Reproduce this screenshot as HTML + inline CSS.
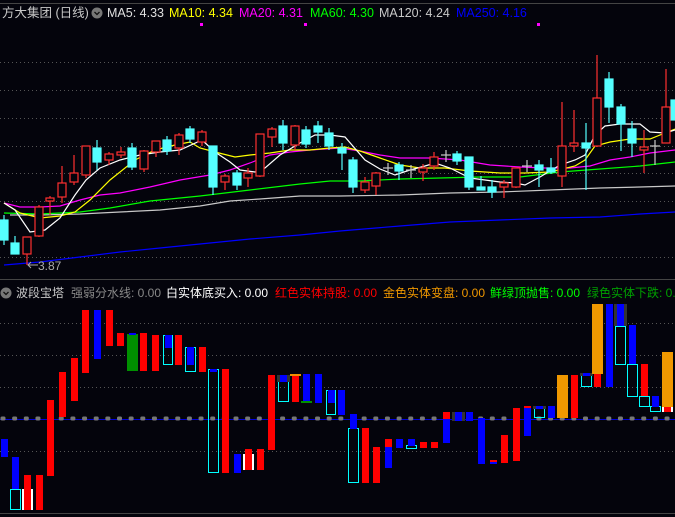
<!DOCTYPE html><html><head><meta charset="utf-8"><style>
body{margin:0;background:#04040c;width:675px;height:517px;overflow:hidden;position:relative;font-family:"Liberation Sans","Noto Sans CJK SC",sans-serif}
svg{position:absolute;left:0;top:0}
.t{position:absolute;font-size:12.5px;white-space:nowrap;line-height:14px}
.b{font-size:12px}
</style></head><body>
<svg width="675" height="517" viewBox="0 0 675 517">
<line x1="0" y1="3.5" x2="675" y2="3.5" stroke="#444" />
<line x1="0" y1="279.5" x2="675" y2="279.5" stroke="#444"/>
<line x1="0" y1="513.5" x2="675" y2="513.5" stroke="#444"/>
<g stroke="#555" stroke-dasharray="1,3">
<line x1="0" y1="62.5" x2="675" y2="62.5"/><line x1="0" y1="90.5" x2="675" y2="90.5"/><line x1="0" y1="118.5" x2="675" y2="118.5"/><line x1="0" y1="146.5" x2="675" y2="146.5"/><line x1="0" y1="173.5" x2="675" y2="173.5"/><line x1="0" y1="201.5" x2="675" y2="201.5"/><line x1="0" y1="257.5" x2="675" y2="257.5"/>
<line x1="0" y1="323.5" x2="675" y2="323.5"/><line x1="0" y1="355.5" x2="675" y2="355.5"/><line x1="0" y1="387.5" x2="675" y2="387.5"/><line x1="0" y1="451.5" x2="675" y2="451.5"/>
</g>
<g fill="#ff00ff"><rect x="200" y="23" width="3" height="3"/><rect x="304" y="23" width="3" height="3"/><rect x="537" y="23" width="3" height="3"/></g>
<g fill="none" stroke-width="1.2">
<polyline stroke="#0000ff" points="4,265 40,262 80,257 120,252 160,248 200,244 250,239 300,235 340,231 400,226 450,222 500,220 550,218 600,217 640,214 675,212"/>
<polyline stroke="#c8c8c8" points="10,215 40,215 80,214 120,212 160,210 200,206 230,201 260,199 300,196 340,196 400,195 450,193 500,192 550,190 600,188 640,187 675,186"/>
<polyline stroke="#00ff00" points="4,213 40,214 80,212 110,208 150,201 200,196 250,190 300,184 330,181 360,181 400,179 440,178 480,177 520,177 560,172 600,169 640,166 675,162"/>
<polyline stroke="#ff00ff" points="4,203 20,207 40,207 60,206 80,200 100,195 120,193 150,187 180,180 210,175 230,170 250,163 270,155 290,152 310,150 340,148 360,151 380,155 400,158 430,158 460,160 490,165 520,167 545,168 570,168 590,166 610,160 630,157 650,153 675,150"/>
<polyline stroke="#ffff00" points="4,203 20,213 40,218 60,216 75,212 90,200 110,180 135,160 155,150 175,145 190,142 200,148 215,152 235,157 250,155 270,153 290,150 310,150 330,148 345,147 360,151 380,158 400,165 420,168 445,168 470,171 500,173 525,173 550,172 575,166 585,160 595,146 610,142 630,139 650,139 665,133 675,129"/>
<polyline stroke="#ffffff" points="4,203 15,210 30,232 45,230 60,218 75,195 86,180 100,168 120,160 140,155 160,152 180,150 202,140 215,152 230,162 240,170 255,172 265,168 280,155 300,143 315,135 330,135 345,137 365,160 380,169 395,175 410,170 425,166 435,163 450,168 470,178 485,180 500,182 515,183 525,185 540,177 560,165 575,160 585,155 595,135 605,126 620,124 640,124 650,132 665,133 675,130"/>
</g>
<g stroke-width="1.2">
<g stroke="#55ffff" fill="#55ffff">
<line x1="4" y1="215" x2="4" y2="245"/><rect x="0" y="220" width="8" height="20"/>
<line x1="15" y1="236" x2="15" y2="254"/><rect x="11" y="243" width="8" height="11"/>
<line x1="97" y1="140" x2="97" y2="170"/><rect x="93" y="148" width="8" height="14"/>
<line x1="132" y1="143" x2="132" y2="170"/><rect x="128" y="148" width="8" height="19"/>
<line x1="167" y1="136" x2="167" y2="155"/><rect x="163" y="140" width="8" height="11"/>
<line x1="190" y1="126" x2="190" y2="143"/><rect x="186" y="129" width="8" height="10"/>
<line x1="213" y1="146" x2="213" y2="195"/><rect x="209" y="146" width="8" height="41"/>
<line x1="237" y1="170" x2="237" y2="190"/><rect x="233" y="173" width="8" height="12"/>
<line x1="283" y1="120" x2="283" y2="150"/><rect x="279" y="126" width="8" height="17"/>
<line x1="306" y1="126" x2="306" y2="148"/><rect x="302" y="130" width="8" height="14"/>
<line x1="318" y1="121" x2="318" y2="143"/><rect x="314" y="126" width="8" height="6"/>
<line x1="329" y1="128" x2="329" y2="150"/><rect x="325" y="133" width="8" height="13"/>
<line x1="342" y1="143" x2="342" y2="170"/><rect x="338" y="148" width="8" height="5"/>
<line x1="353" y1="157" x2="353" y2="193"/><rect x="349" y="160" width="8" height="27"/>
<line x1="399" y1="162" x2="399" y2="180"/><rect x="395" y="165" width="8" height="6"/>
<line x1="457" y1="151" x2="457" y2="165"/><rect x="453" y="154" width="8" height="7"/>
<line x1="469" y1="157" x2="469" y2="190"/><rect x="465" y="157" width="8" height="30"/>
<line x1="481" y1="176" x2="481" y2="190"/><rect x="477" y="187" width="8" height="3"/>
<line x1="492" y1="180" x2="492" y2="198"/><rect x="488" y="187" width="8" height="5"/>
<line x1="539" y1="160" x2="539" y2="187"/><rect x="535" y="165" width="8" height="5"/>
<line x1="551" y1="158" x2="551" y2="174"/><rect x="547" y="168" width="8" height="4"/>
<line x1="586" y1="123" x2="586" y2="190"/><rect x="582" y="143" width="8" height="5"/>
<line x1="609" y1="72" x2="609" y2="123"/><rect x="605" y="79" width="8" height="28"/>
<line x1="621" y1="104" x2="621" y2="151"/><rect x="617" y="107" width="8" height="17"/>
<line x1="632" y1="121" x2="632" y2="157"/><rect x="628" y="129" width="8" height="14"/>
<rect x="671" y="100" width="4" height="20"/>
</g>
<g stroke="#ff3030" fill="#04040c">
<line x1="27" y1="237" x2="27" y2="265"/><rect x="23" y="237" width="8" height="17"/>
<line x1="39" y1="205" x2="39" y2="237"/><rect x="35" y="207" width="8" height="29"/>
<line x1="50" y1="196" x2="50" y2="215"/><rect x="46" y="198" width="8" height="3"/>
<line x1="62" y1="166" x2="62" y2="203"/><rect x="58" y="183" width="8" height="14"/>
<line x1="74" y1="155" x2="74" y2="185"/><rect x="70" y="173" width="8" height="9"/>
<line x1="86" y1="146" x2="86" y2="178"/><rect x="82" y="146" width="8" height="29"/>
<line x1="109" y1="152" x2="109" y2="165"/><rect x="105" y="154" width="8" height="6"/>
<line x1="121" y1="147" x2="121" y2="158"/><rect x="117" y="152" width="8" height="3"/>
<line x1="144" y1="150" x2="144" y2="172"/><rect x="140" y="151" width="8" height="18"/>
<line x1="156" y1="141" x2="156" y2="157"/><rect x="152" y="141" width="8" height="11"/>
<line x1="179" y1="133" x2="179" y2="155"/><rect x="175" y="135" width="8" height="13"/>
<line x1="202" y1="130" x2="202" y2="146"/><rect x="198" y="132" width="8" height="10"/>
<line x1="225" y1="174" x2="225" y2="190"/><rect x="221" y="176" width="8" height="6"/>
<line x1="248" y1="168" x2="248" y2="187"/><rect x="244" y="173" width="8" height="5"/>
<line x1="260" y1="134" x2="260" y2="177"/><rect x="256" y="134" width="8" height="42"/>
<line x1="272" y1="127" x2="272" y2="147"/><rect x="268" y="129" width="8" height="8"/>
<line x1="295" y1="125" x2="295" y2="150"/><rect x="291" y="126" width="8" height="19"/>
<line x1="365" y1="177" x2="365" y2="193"/><rect x="361" y="182" width="8" height="8"/>
<line x1="376" y1="172" x2="376" y2="195"/><rect x="372" y="173" width="8" height="13"/>
<line x1="423" y1="164" x2="423" y2="181"/><rect x="419" y="168" width="8" height="4"/>
<line x1="434" y1="152" x2="434" y2="170"/><rect x="430" y="157" width="8" height="9"/>
<line x1="504" y1="180" x2="504" y2="198"/><rect x="500" y="183" width="8" height="4"/>
<line x1="516" y1="168" x2="516" y2="188"/><rect x="512" y="168" width="8" height="19"/>
<line x1="562" y1="102" x2="562" y2="187"/><rect x="558" y="146" width="8" height="30"/>
<line x1="574" y1="110" x2="574" y2="152"/><rect x="570" y="143" width="8" height="3"/>
<line x1="597" y1="55" x2="597" y2="147"/><rect x="593" y="98" width="8" height="48"/>
<line x1="644" y1="130" x2="644" y2="173"/><rect x="640" y="147" width="8" height="3"/>
<line x1="666" y1="69" x2="666" y2="143"/><rect x="662" y="107" width="8" height="36"/>
</g>
<g stroke="#c8c8c8">
<line x1="388" y1="163" x2="388" y2="175"/><line x1="383" y1="168" x2="393" y2="168"/>
<line x1="411" y1="165" x2="411" y2="178"/><line x1="406" y1="170" x2="416" y2="170"/>
<line x1="446" y1="150" x2="446" y2="162"/><line x1="441" y1="155" x2="451" y2="155"/>
<line x1="527" y1="160" x2="527" y2="172"/><line x1="522" y1="166" x2="532" y2="166"/>
<line x1="655" y1="140" x2="655" y2="165"/><line x1="650" y1="146" x2="660" y2="146"/>
</g>
</g>
<g stroke="#aaa" fill="none"><line x1="28" y1="265" x2="38" y2="265"/><polyline points="31,262 28,265 31,268"/></g>
<text x="38" y="270" fill="#aaaaaa" font-size="12" font-family="Liberation Sans">3.87</text>
<line x1="0" y1="419.5" x2="675" y2="419.5" stroke="#0000dd"/>
<g fill="#777" id="dots"></g>
<g>
<rect x="1" y="439" width="7" height="18" fill="#0000ff"/>
<rect x="12" y="457" width="7" height="33" fill="#0000ff"/>
<rect x="10.5" y="489.5" width="10" height="20" fill="none" stroke="#00ffff"/>
<rect x="22" y="489" width="11" height="21" fill="#fff"/><rect x="24" y="475" width="7" height="35" fill="#ff0000"/>
<rect x="36" y="475" width="7" height="35" fill="#ff0000"/>
<rect x="47" y="400" width="7" height="76" fill="#ff0000"/>
<rect x="59" y="372" width="7" height="45" fill="#ff0000"/>
<rect x="71" y="358" width="7" height="43" fill="#ff0000"/>
<rect x="82" y="310" width="7" height="63" fill="#ff0000"/>
<rect x="94" y="310" width="7" height="49" fill="#0000ff"/>
<rect x="106" y="310" width="7" height="36" fill="#ff0000"/>
<rect x="117" y="333" width="7" height="13" fill="#ff0000"/>
<rect x="127" y="334" width="11" height="37" fill="#009000"/><rect x="129" y="333" width="7" height="2" fill="#0000ff"/>
<rect x="140" y="333" width="7" height="38" fill="#ff0000"/>
<rect x="152" y="335" width="7" height="36" fill="#ff0000"/>
<rect x="163.5" y="335.5" width="9" height="29" fill="none" stroke="#00ffff"/><rect x="165" y="335" width="7" height="13" fill="#0000ff"/>
<rect x="175" y="335" width="7" height="30" fill="#ff0000"/>
<rect x="185.5" y="347.5" width="10" height="24" fill="none" stroke="#00ffff"/><rect x="187" y="347" width="7" height="18" fill="#0000ff"/>
<rect x="199" y="347" width="7" height="25" fill="#ff0000"/>
<rect x="208.5" y="369.5" width="10" height="103" fill="none" stroke="#00ffff"/><rect x="210" y="369" width="7" height="3" fill="#0000ff"/>
<rect x="222" y="369" width="7" height="104" fill="#ff0000"/>
<rect x="234" y="454" width="7" height="19" fill="#0000ff"/>
<rect x="243" y="454" width="11" height="16" fill="#fff"/><rect x="245" y="449" width="7" height="21" fill="#ff0000"/>
<rect x="257" y="449" width="7" height="21" fill="#ff0000"/>
<rect x="268" y="375" width="7" height="75" fill="#ff0000"/>
<rect x="278.5" y="375.5" width="10" height="26" fill="none" stroke="#00ffff"/><rect x="277" y="375" width="13" height="7" fill="#333"/><rect x="280" y="375" width="7" height="7" fill="#0000ff"/>
<rect x="290" y="374" width="11" height="2" fill="#f09000"/><rect x="292" y="376" width="7" height="26" fill="#ff0000"/>
<rect x="303" y="374" width="7" height="28" fill="#0000ff"/><rect x="301" y="401" width="11" height="2" fill="#009000"/>
<rect x="315" y="374" width="7" height="29" fill="#0000ff"/>
<rect x="326.5" y="390.5" width="9" height="24" fill="none" stroke="#00ffff"/><rect x="328" y="390" width="7" height="13" fill="#0000ff"/>
<rect x="338" y="390" width="7" height="25" fill="#0000ff"/>
<rect x="348.5" y="428.5" width="10" height="54" fill="none" stroke="#00ffff"/><rect x="350" y="414" width="7" height="15" fill="#0000ff"/>
<rect x="362" y="428" width="7" height="55" fill="#ff0000"/>
<rect x="373" y="447" width="7" height="36" fill="#ff0000"/>
<rect x="385" y="439" width="7" height="8" fill="#ff0000"/><rect x="385" y="447" width="7" height="21" fill="#0000ff"/>
<rect x="396" y="439" width="7" height="9" fill="#0000ff"/>
<rect x="406.5" y="445.5" width="10" height="3" fill="none" stroke="#00ffff"/><rect x="408" y="439" width="7" height="7" fill="#0000ff"/>
<rect x="420" y="442" width="7" height="6" fill="#ff0000"/>
<rect x="431" y="442" width="7" height="6" fill="#ff0000"/>
<rect x="443" y="412" width="7" height="7" fill="#ff0000"/><rect x="443" y="419" width="7" height="24" fill="#0000ff"/>
<rect x="452" y="412" width="13" height="9" fill="#333"/><rect x="455" y="412" width="7" height="9" fill="#0000ff"/>
<rect x="466" y="412" width="7" height="9" fill="#0000ff"/>
<rect x="478" y="418" width="7" height="46" fill="#0000ff"/>
<rect x="490" y="460" width="7" height="2" fill="#ff0000"/><rect x="490" y="462" width="7" height="2" fill="#0000ff"/>
<rect x="501" y="435" width="7" height="28" fill="#ff0000"/>
<rect x="513" y="408" width="7" height="53" fill="#ff0000"/>
<rect x="524" y="406" width="7" height="2" fill="#ff0000"/><rect x="524" y="408" width="7" height="28" fill="#0000ff"/>
<rect x="534.5" y="408.5" width="10" height="9" fill="none" stroke="#00ffff"/><rect x="533" y="406" width="13" height="3" fill="#333"/><rect x="536" y="406" width="7" height="3" fill="#0000ff"/>
<rect x="548" y="406" width="7" height="12" fill="#0000ff"/>
<rect x="557" y="375" width="11" height="43" fill="#f09800"/>
<rect x="571" y="375" width="7" height="43" fill="#ff0000"/>
<rect x="581.5" y="375.5" width="10" height="11" fill="none" stroke="#00ffff"/><rect x="580" y="373" width="13" height="3" fill="#333"/><rect x="583" y="373" width="7" height="3" fill="#0000ff"/>
<rect x="592" y="304" width="11" height="70" fill="#f09800"/><rect x="594" y="374" width="7" height="13" fill="#ff0000"/>
<rect x="606" y="304" width="7" height="83" fill="#0000ff"/>
<rect x="615.5" y="326.5" width="10" height="38" fill="none" stroke="#00ffff"/><rect x="614" y="304" width="13" height="22" fill="#333"/><rect x="617" y="304" width="7" height="22" fill="#0000ff"/>
<rect x="629" y="325" width="7" height="40" fill="#0000ff"/>
<rect x="627.5" y="364.5" width="10" height="32" fill="none" stroke="#00ffff"/>
<rect x="641" y="364" width="7" height="32" fill="#ff0000"/>
<rect x="639.5" y="396.5" width="10" height="10" fill="none" stroke="#00ffff"/>
<rect x="650.5" y="406.5" width="10" height="5" fill="none" stroke="#00ffff"/><rect x="652" y="396" width="7" height="11" fill="#0000ff"/>
<rect x="662" y="352" width="11" height="55" fill="#f09800"/><rect x="662" y="407" width="11" height="5" fill="#fff"/><rect x="664" y="407" width="7" height="5" fill="#ff0000"/>
</g>
<circle cx="97" cy="13" r="5.5" fill="#777"/><polyline points="94.5,12 97,14.5 99.5,12" fill="none" stroke="#111" stroke-width="1.3"/>
<circle cx="6" cy="293" r="5.5" fill="#777"/><polyline points="3.5,292 6,294.5 8.5,292" fill="none" stroke="#111" stroke-width="1.3"/>
</svg>
<script>
var g=document.getElementById('dots'),s='';for(var x=3;x<675;x+=11.65){s+='<rect x="'+(x-2.5)+'" y="416.5" width="5" height="4" rx="1.5"/>';}g.innerHTML=s;
</script>
<div class="t" style="left:2px;top:6px;color:#c8c8c8">方大集团 (日线)</div>
<div class="t" style="left:107px;top:6px;color:#e0e0e0">MA5: 4.33</div>
<div class="t" style="left:169px;top:6px;color:#ffff00">MA10: 4.34</div>
<div class="t" style="left:239px;top:6px;color:#ff00ff">MA20: 4.31</div>
<div class="t" style="left:310px;top:6px;color:#00ff00">MA60: 4.30</div>
<div class="t" style="left:379px;top:6px;color:#c8c8c8">MA120: 4.24</div>
<div class="t" style="left:456px;top:6px;color:#0000ff">MA250: 4.16</div>
<div class="t b" style="left:16px;top:286px;color:#c8c8c8">波段宝塔</div>
<div class="t b" style="left:71px;top:286px;color:#888">强弱分水线: 0.00</div>
<div class="t b" style="left:166px;top:286px;color:#fff">白实体底买入: 0.00</div>
<div class="t b" style="left:275px;top:286px;color:#ff0000">红色实体持股: 0.00</div>
<div class="t b" style="left:383px;top:286px;color:#f09800">金色实体变盘: 0.00</div>
<div class="t b" style="left:490px;top:286px;color:#00ff00">鲜绿顶抛售: 0.00</div>
<div class="t b" style="left:587px;top:286px;color:#00a000">绿色实体下跌: 0.00</div>
</body></html>
